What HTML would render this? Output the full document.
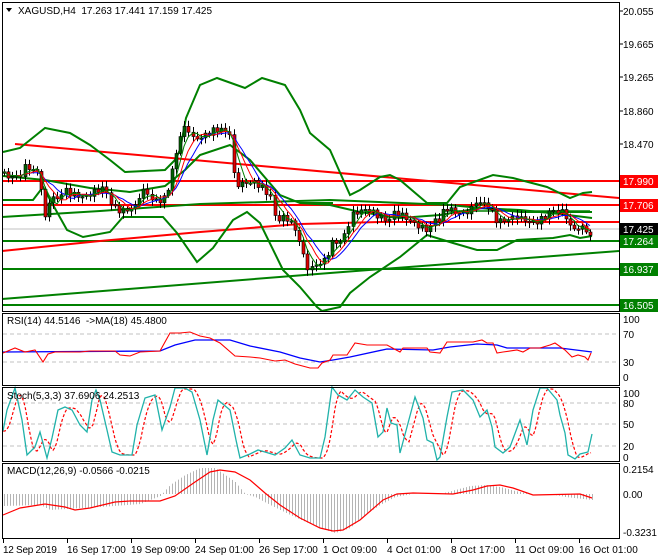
<!DOCTYPE html>
<html><head><meta charset="utf-8"><style>
html,body{margin:0;padding:0;background:#fff;width:660px;height:560px;overflow:hidden}
svg{display:block}
text{font-family:"Liberation Sans",sans-serif;font-size:10px}
</style></head><body>
<svg id="s" width="660" height="560" xmlns="http://www.w3.org/2000/svg"></svg>
<script>
(function(){
var S=document.getElementById('s'),h='';
function interp(pts,x){if(x<=pts[0][0])return pts[0][1];for(var i=1;i<pts.length;i++){if(x<=pts[i][0]){var a=pts[i-1],b=pts[i];return a[1]+(b[1]-a[1])*(x-a[0])/(b[0]-a[0]);}}return pts[pts.length-1][1];}
function pl(pts,c,w,extra){return '<polyline fill="none" stroke="'+c+'" stroke-width="'+w+'" '+(extra||'')+' points="'+pts.map(function(p){return p[0]+','+p[1]}).join(' ')+'"/>';}
function ln(x1,y1,x2,y2,c,w,extra){return '<line x1="'+x1+'" y1="'+y1+'" x2="'+x2+'" y2="'+y2+'" stroke="'+c+'" stroke-width="'+w+'" '+(extra||'')+'/>';}
function tx(x,y,t,c,extra){return '<text x="'+x+'" y="'+y+'" fill="'+(c||'#000')+'" '+(extra||'')+'>'+t+'</text>';}
var G='#008000',R='#ff0000';
h+=ln(3,229,619,229,'#c0c0c0',1);
h+=ln(3,181,619,181,R,2);
h+=ln(3,205,619,205,R,2);
h+=ln(3,241,619,241,G,2);
h+=ln(3,269,619,269,G,2);
h+=ln(3,305,619,305,G,2);
h+=ln(15,144,619,198,R,2);
h+=pl([[2,251],[100,241],[200,232],[300,224],[380,222],[619,222]],R,2);
h+=pl([[2,299],[330,273],[619,251]],G,2);
h+=pl([[2,217],[100,211],[200,204],[330,200],[450,205],[520,212],[592,212]],G,2);
h+=pl([[300,203],[333,203]],G,2);
h+=pl([[443,211],[493,211],[590,211]],G,1.5);
var up=[[3,152],[20,148],[45,128],[70,133],[90,145],[110,160],[125,172],[165,170],[175,160],[180,150],[186,118],[200,85],[217,78],[245,88],[262,78],[285,85],[300,110],[310,133],[330,150],[350,195],[360,190],[380,177],[390,175],[400,180],[427,203],[447,203],[460,187],[493,175],[513,178],[547,187],[570,198],[583,193],[592,192]];
var lo=[[3,200],[33,200],[43,187],[67,230],[83,237],[110,232],[123,217],[163,217],[177,233],[197,262],[213,248],[233,220],[247,212],[260,223],[283,270],[300,287],[317,307],[322,311]];
var lo2=[[322,311],[340,307],[350,293],[370,277],[400,257],[427,235],[453,243],[477,250],[497,250],[517,240],[553,238],[570,235],[580,238],[592,236]];
var mid=[[3,176],[45,180],[90,188],[130,192],[165,186],[185,170],[200,155],[230,145],[250,160],[280,195],[300,203],[330,205],[360,212],[400,218],[440,215],[480,208],[520,210],[560,214],[592,218]];
h+=pl(up,G,2)+pl(lo,G,2)+pl(lo2,G,2)+pl(mid,G,2);
var pp=[[3,172],[40,172],[44,222],[48,195],[70,195],[90,190],[100,190],[115,205],[135,207],[140,197],[165,195],[170,180],[175,160],[182,133],[230,135],[235,180],[255,188],[270,195],[275,215],[290,225],[300,245],[305,265],[325,265],[333,245],[340,243],[350,215],[390,215],[405,222],[440,225],[445,210],[490,205],[495,215],[520,220],[545,215],[565,210],[570,222],[585,228],[590,242],[593,230]];
var prev=interp(pp,3),cl=[],xs=[];
for(var x=4;x<=593;x+=4.1){var xx=Math.round(x);var c=interp(pp,xx)+5*Math.sin(xx*1.7)+3*Math.cos(xx*0.9);var o=prev;var hi=Math.min(o,c)-2-Math.abs(4*Math.sin(xx*2.3));var lw=Math.max(o,c)+2+Math.abs(4*Math.cos(xx*1.3));
h+=ln(xx+0.5,hi,xx+0.5,lw,'#000',1);var bt=Math.min(o,c),bh=Math.max(1.5,Math.abs(c-o));
h+='<rect x="'+(xx-1)+'" y="'+bt+'" width="3" height="'+bh+'" fill="'+(c<o?'#006400':'#e00000')+'" stroke="#000" stroke-width="0.6"/>';
prev=c;cl.push(c);xs.push(xx);}
function sm(n,off){var r=[];for(var i=0;i<cl.length;i++){var s=0,k=0;for(var j=Math.max(0,i-n+1);j<=i;j++){s+=cl[j];k++;}r.push([xs[i],s/k+off]);}return r;}
h+=pl(sm(8,0),'#0000ff',1)+pl(sm(6,0),R,1)+pl(sm(4,0),G,1);
[[20.055,11],[19.665,44],[19.265,77],[18.860,111],[18.470,144]].forEach(function(a){h+=ln(619,a[1],623,a[1],'#000',1)+tx(623,a[1]+4,a[0].toFixed(3));});
[['17.990',181,R],['17.706',205,R],['17.425',229,'#000'],['17.264',241,G],['16.937',269,G],['16.505',305,G]].forEach(function(a){h+='<rect x="620" y="'+(a[1]-6)+'" width="38" height="13" fill="'+a[2]+'"/>'+tx(623,a[1]+4,a[0],'#fff');});
h+='<polygon points="6,8 12,8 9,12" fill="#000"/>'+tx(18,14,'XAGUSD,H4&#160;&#160;17.263 17.441 17.159 17.425');
h+=ln(3,334,619,334,'#c0c0c0',1,'stroke-dasharray="4,3"')+ln(3,362,619,362,'#c0c0c0',1,'stroke-dasharray="4,3"');
var rsiR=[[3,353],[15,348],[25,352],[35,350],[43,362],[48,354],[55,352],[80,352],[90,351],[115,351],[120,355],[130,356],[140,352],[160,351],[170,333],[180,333],[190,332],[200,336],[210,338],[220,343],[235,356],[250,357],[260,358],[275,361],[285,360],[295,364],[310,368],[318,368],[322,363],[330,360],[333,355],[347,355],[355,343],[367,345],[387,345],[400,352],[403,348],[427,348],[430,352],[440,353],[447,342],[473,342],[482,340],[487,343],[493,343],[497,353],[503,352],[517,350],[523,352],[530,348],[540,348],[550,345],[555,343],[565,350],[572,357],[578,355],[585,357],[588,360],[591,353]];
var rsiB=[[3,352],[160,351],[175,345],[195,340],[230,340],[250,346],[280,352],[300,358],[320,362],[333,360],[350,357],[387,349],[433,350],[450,347],[477,344],[497,345],[507,348],[560,348],[592,352]];
h+=pl(rsiB,'#0000ff',1.3)+pl(rsiR,R,1.1);
h+=tx(7,324,'RSI(14) 44.5146&#160;&#160;-&gt;MA(18) 45.4800');
[['100',319],['70',334],['30',362],['0',377]].forEach(function(a){h+=tx(623,a[1]+4,a[0]);});
[403,424,446].forEach(function(y){h+=ln(3,y,619,y,'#c0c0c0',1,'stroke-dasharray="4,3"');});
var st=[[3,431],[7,410],[15,388],[22,420],[27,455],[35,447],[40,432],[47,458],[52,438],[58,410],[65,407],[72,410],[80,425],[87,432],[92,400],[96,390],[100,400],[107,430],[112,452],[120,455],[132,455],[137,425],[145,398],[155,395],[162,430],[170,407],[175,388],[185,388],[192,392],[200,420],[207,455],[213,420],[218,400],[230,410],[236,440],[240,458],[250,454],[258,450],[265,452],[275,455],[285,448],[292,440],[300,455],[310,458],[320,458],[325,437],[332,387],[338,395],[347,400],[355,390],[363,397],[372,403],[378,437],[383,432],[387,408],[391,423],[397,425],[400,453],[407,427],[415,397],[423,418],[427,440],[433,443],[437,460],[440,457],[447,417],[452,392],[463,390],[473,400],[480,417],[487,410],[492,427],[495,447],[503,453],[510,447],[520,420],[527,445],[533,410],[540,388],[547,388],[557,400],[560,415],[565,433],[568,455],[575,459],[580,454],[588,452],[592,434]];
var sd=[];for(var x=3;x<=592;x+=2){var v=(interp(st,x-3)+interp(st,x-6)+interp(st,x-9))/3;sd.push([x,Math.max(389,Math.min(459,v))]);}
h+=pl(sd,R,1.2,'stroke-dasharray="3,2"')+pl(st,'#20b2aa',1.3);
h+=tx(7,399,'Stoch(5,3,3) 37.6906 24.2513');
[['100',393],['80',403],['50',424],['20',446],['0',457]].forEach(function(a){h+=tx(623,a[1]+4,a[0]);});
var hist=[[3,506],[40,505],[50,510],[65,509],[100,507],[140,504],[160,496],[170,485],[185,475],[200,468],[215,468],[235,482],[245,494],[255,497],[270,505],[290,515],[310,524],[325,530],[335,533],[350,528],[365,515],[380,505],[395,497],[413,494],[440,494],[455,490],[470,486],[485,485],[500,487],[515,491],[530,494],[550,494],[565,497],[592,500]];
for(var x=4;x<=592;x+=3){var v=interp(hist,x);if(Math.abs(v-494)>0.5)h+=ln(x+0.5,494,x+0.5,v,'#b4b4b4',1);}
var sig=[[3,515],[20,508],[45,504],[65,507],[75,510],[90,508],[115,502],[130,501],[160,501],[175,496],[195,482],[210,472],[220,470],[235,472],[250,480],[265,493],[280,505],[300,518],[320,528],[333,531],[343,530],[360,520],[383,500],[397,494],[413,493],[453,494],[473,490],[487,486],[500,485],[513,488],[533,495],[580,494],[592,498]];
h+=pl(sig,R,1.2);
h+=tx(7,474,'MACD(12,26,9) -0.0566 -0.0215');
[['0.2154',469],['0.00',494],['-0.3231',532]].forEach(function(a){h+=tx(623,a[1]+4,a[0]);});
[[2,2,617,309],[2,313,617,72],[2,387,617,74],[2,463,617,75]].forEach(function(r){h+='<rect x="'+(r[0]+0.5)+'" y="'+(r[1]+0.5)+'" width="'+r[2]+'" height="'+r[3]+'" fill="none" stroke="#000" stroke-width="1"/>';});
[[3,'12 Sep 2019'],[67,'16 Sep 17:00'],[131,'19 Sep 09:00'],[195,'24 Sep 01:00'],[259,'26 Sep 17:00'],[323,'1 Oct 09:00'],[387,'4 Oct 01:00'],[451,'8 Oct 17:00'],[515,'11 Oct 09:00'],[579,'16 Oct 01:00']].forEach(function(a){h+=ln(a[0]+0.5,538,a[0]+0.5,543,'#000',1)+tx(a[0],553,a[1],'#000','textLength="'+(a[1].length*4.9)+'"');});
S.innerHTML=h;
})();
</script>
</body></html>
